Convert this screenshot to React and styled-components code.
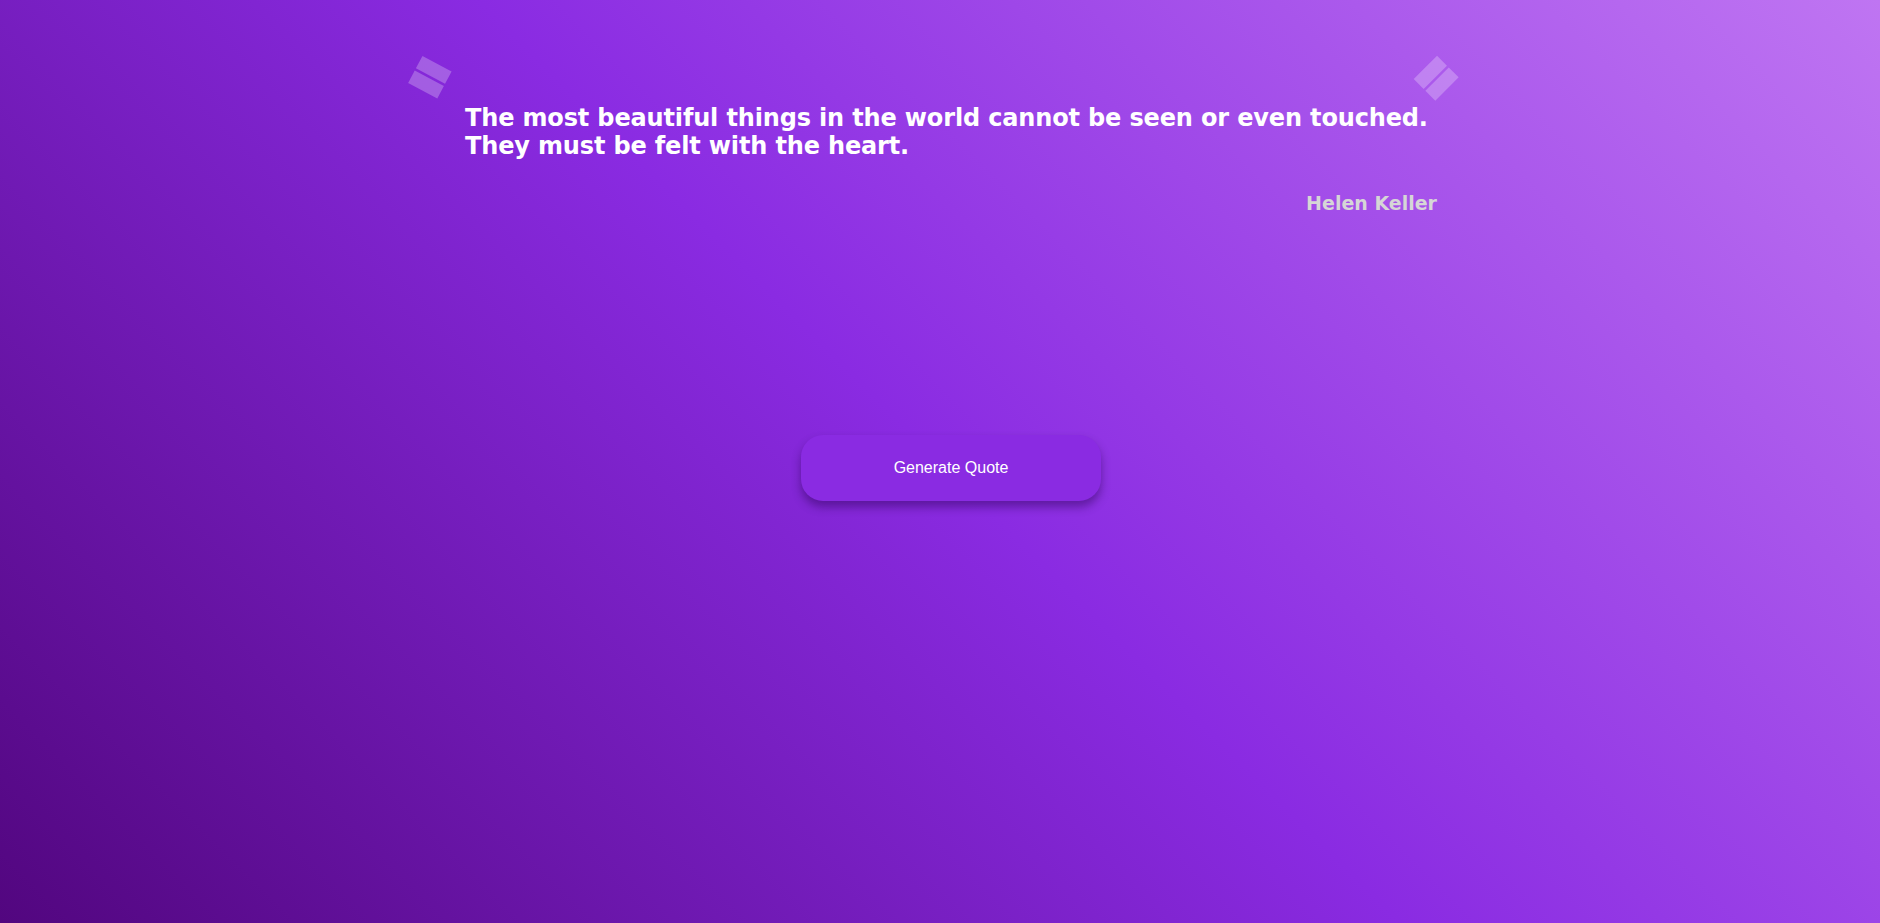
import React from "react";
import styled, { createGlobalStyle } from "styled-components";

const GlobalStyle = createGlobalStyle`
  html, body {
    margin: 0;
    padding: 0;
  }
  body {
    font-family: "DejaVu Sans", Verdana, sans-serif;
  }
`;

const Page = styled.div`
  min-height: 100vh;
  background: linear-gradient(45deg, #52067f 0%, #8a2be2 50%, #bf75f2 100%);
  display: flex;
  flex-direction: column;
  padding-top: 54px;
  box-sizing: border-box;
`;

const Card = styled.div`
  width: 1054px;
  margin-left: calc(50% - 534px);
  display: flex;
  flex-direction: column;
`;

const IconRow = styled.div`
  display: flex;
  justify-content: space-between;
  align-items: flex-start;
  height: 46px;
`;

const QuoteMark = styled.svg`
  width: 48px;
  height: 48px;
  margin-top: ${(p) => (p.$side === "left" ? "-1px" : "0")};
`;

const QuoteText = styled.p`
  margin: 4px 0 0;
  padding: 0 23px 0 59px;
  color: #fff;
  font-weight: bold;
  font-size: 24px;
  line-height: 28px;
  letter-spacing: -0.15px;
`;

const Author = styled.p`
  margin: 31px 0 0;
  padding-right: 23px;
  text-align: right;
  color: #d6d6d6;
  font-weight: bold;
  font-size: 19px;
  line-height: 24px;
`;

const Button = styled.button`
  margin: 220px 0 0 calc(50% - 139px);
  width: 300px;
  height: 66px;
  border: none;
  border-radius: 22px;
  background: #8a2be2;
  color: #fff;
  font-family: "Liberation Sans", Arial, sans-serif;
  font-size: 16px;
  box-shadow: 0 6px 10px rgba(40, 0, 80, 0.45);
  cursor: pointer;
`;

function Mark({ side }) {
  const angle = side === "left" ? 28 : -45;
  return (
    <QuoteMark $side={side} viewBox="0 0 48 48">
      <g transform={`rotate(${angle} 24 24)`} fill="rgba(255,255,255,0.25)">
        <rect x="7.5" y="9" width="33" height="14" />
        <rect x="7.5" y="25.5" width="33" height="14" />
      </g>
    </QuoteMark>
  );
}

function App() {
  return (
    <>
      <GlobalStyle />
      <Page>
        <Card>
          <IconRow>
            <Mark side="left" />
            <Mark side="right" />
          </IconRow>
          <QuoteText>
            The most beautiful things in the world cannot be seen or even touched.
            <br />
            They must be felt with the heart.
          </QuoteText>
          <Author>Helen Keller</Author>
        </Card>
        <Button>Generate Quote</Button>
      </Page>
    </>
  );
}

export default App;
